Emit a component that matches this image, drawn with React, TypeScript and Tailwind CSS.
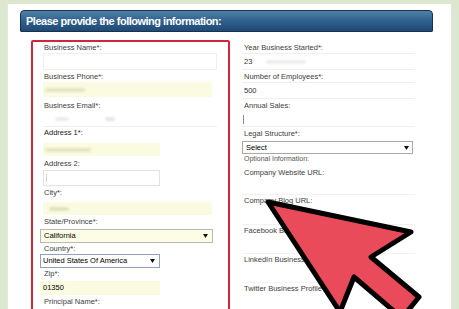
import type { ReactNode } from 'react'

const font = "font-['Liberation_Sans',Arial,sans-serif]"

function Label({ children, className = '' }: { children: ReactNode; className?: string }) {
    return (
        <div className={`pl-[1px] text-[7.5px] text-[#3d3d3d] whitespace-nowrap ${className}`}>
            {children}
        </div>
    )
}

function Caret() {
    return (
        <svg width="5" height="4" viewBox="0 0 5 4" className="shrink-0">
            <polygon points="0,0 5,0 2.5,4" fill="#111" />
        </svg>
    )
}

function Smudge({ w, color = 'bg-[#e2e5c0]', ml = 'ml-[2px]' }: { w: string; color?: string; ml?: string }) {
    return <div className={`${w} ${color} ${ml} h-[4px] rounded-full blur-[1px]`} />
}

export default function App() {
    return (
        <div className={`relative h-[309px] w-[459px] overflow-hidden bg-[#dbe7cf] px-[7px] pt-[4px] ${font}`}>
            <div className="h-full border-x border-[#e4e4e4] bg-white pl-[12px] pt-[6px]">
                {/* header bar */}
                <div className="flex h-[22px] w-[413px] items-center rounded-t-[4px] rounded-b-[1px] border border-[#17314f] bg-gradient-to-b from-[#4f80ab] via-[#30608c] to-[#1f4a74] pl-[5px]">
                    <span className="text-[11px] font-bold tracking-[-0.5px] text-white">
                        Please provide the following information:
                    </span>
                </div>

                <div className="mt-[8px] flex items-start">
                    {/* left column, outlined */}
                    <div className="ml-[11px] flex h-[300px] w-[199px] flex-col rounded-[2px] border-2 border-[#d0263b] pl-[10px]">
                        <Label className="h-[11px] leading-[11px]">Business Name*:</Label>
                        <div className="h-[17px] w-[174px] border border-[#efefef]" />
                        <Label className="mt-[1px] h-[11px] leading-[11px]">Business Phone*:</Label>
                        <div className="flex h-[15px] w-[169px] items-center bg-[#fbfbe2]">
                            <Smudge w="w-[40px]" />
                        </div>
                        <Label className="mt-[3px] h-[12px] leading-[12px]">Business Email*:</Label>
                        <div className="flex h-[15px] w-[174px] items-center border-b border-[#efefef]">
                            <Smudge w="w-[14px]" color="bg-[#ececec]" ml="ml-[12px]" />
                            <Smudge w="w-[10px]" color="bg-[#e6e6e6]" ml="ml-[36px]" />
                        </div>
                        <Label className="h-[12px] leading-[12px] text-[#222]">Address 1*:</Label>
                        <div className="mt-[4px] flex h-[13px] w-[117px] items-center bg-[#fbfbe2]">
                            <Smudge w="w-[46px]" />
                        </div>
                        <Label className="mt-[2px] h-[12px] leading-[12px]">Address 2:</Label>
                        <div className="flex h-[16px] w-[117px] items-center border border-[#e2e2e2]">
                            <div className="ml-[2px] h-[8px] w-px bg-[#cfcfcf]" />
                        </div>
                        <Label className="mt-[1px] h-[12px] leading-[12px]">City*:</Label>
                        <div className="mt-[3px] flex h-[13px] w-[169px] items-center bg-[#fbfbe2]">
                            <Smudge w="w-[20px]" color="bg-[#dfe2bc]" ml="ml-[6px]" />
                        </div>
                        <Label className="mt-[1px] h-[12px] leading-[12px]">State/Province*:</Label>
                        <div className="ml-[-3px] mt-[1px] flex h-[14px] w-[173px] items-center justify-between border border-[#b8b8b8] bg-[#fdfde6] pl-[3px] pr-[4px]">
                            <span className="text-[7.5px] text-black">California</span>
                            <Caret />
                        </div>
                        <Label className="h-[11px] leading-[11px]">Country*:</Label>
                        <div className="ml-[-3px] flex h-[14px] w-[120px] items-center justify-between border border-[#8ea3bc] bg-white pl-[2px] pr-[4px]">
                            <span className="text-[7.5px] text-black">United States Of America</span>
                            <Caret />
                        </div>
                        <Label className="h-[12px] leading-[12px]">Zip*:</Label>
                        <div className="ml-[-3px] mt-[1px] flex h-[14px] w-[120px] items-center bg-[#fbfbe2] pl-[3px]">
                            <span className="text-[7.5px] text-black">01350</span>
                        </div>
                        <Label className="mt-[1px] h-[12px] leading-[12px]">Principal Name*:</Label>
                    </div>

                    {/* right column */}
                    <div className="ml-[12px] flex w-[174px] flex-col pt-[2px]">
                        <Label className="h-[11px] pl-[2px] leading-[11px]">Year Business Started*:</Label>
                        <div className="flex h-[17px] w-[173px] items-center border-y border-[#efefef] pl-[2px]">
                            <span className="text-[7.5px] text-[#333]">23</span>
                            <Smudge w="w-[40px]" color="bg-[#eeeeee]" ml="ml-[14px]" />
                        </div>
                        <Label className="mt-[1px] h-[11px] pl-[2px] leading-[11px]">Number of Employees*:</Label>
                        <div className="flex h-[17px] w-[173px] items-center border-y border-[#efefef] pl-[2px]">
                            <span className="text-[7.5px] text-[#333]">500</span>
                        </div>
                        <Label className="mt-[1px] h-[12px] pl-[2px] leading-[12px]">Annual Sales:</Label>
                        <div className="flex h-[15px] w-[173px] items-center border-b border-[#efefef] pl-[1px]">
                            <div className="h-[9px] w-px bg-[#8a8a8a]" />
                        </div>
                        <Label className="mt-[1px] h-[12px] pl-[2px] leading-[12px]">Legal Structure*:</Label>
                        <div className="mt-[1px] flex h-[13px] w-[171px] items-center justify-between border border-[#a8a8a8] bg-white pl-[3px] pr-[3px]">
                            <span className="text-[7.5px] text-black">Select</span>
                            <Caret />
                        </div>
                        <Label className="h-[10px] pl-[2px] text-[7px] leading-[10px] text-[#555]">Optional Information:</Label>
                        <Label className="mt-[3px] h-[12px] pl-[2px] leading-[12px]">Company Website URL:</Label>
                        <div className="h-[16px] w-[173px] border-b border-[#f2f2f2]" />
                        <Label className="h-[12px] pl-[2px] leading-[12px]">Company Blog URL:</Label>
                        <div className="h-[18px] w-[173px] border-b border-[#f2f2f2]" />
                        <Label className="h-[12px] pl-[2px] leading-[12px]">Facebook Business Page URL:</Label>
                        <div className="h-[17px] w-[173px] border-b border-[#f2f2f2]" />
                        <Label className="h-[12px] pl-[2px] leading-[12px]">LinkedIn Business Page URL:</Label>
                        <div className="h-[17px] w-[173px] border-b border-[#f2f2f2]" />
                        <Label className="h-[12px] pl-[2px] leading-[12px]">Twitter Business Profile URL:</Label>
                        <div className="h-[17px] w-[173px]" />
                    </div>
                </div>
            </div>

            {/* big pointer arrow drawn over the form */}
            <svg className="pointer-events-none absolute inset-0" width="459" height="309" viewBox="0 0 459 309">
                <polygon
                    points="268,202 411,232 371,257 419,297 402,318 354,277 340,312"
                    fill="#e94b5b"
                    stroke="#000"
                    strokeWidth="5"
                    strokeLinejoin="round"
                />
            </svg>
        </div>
    )
}
